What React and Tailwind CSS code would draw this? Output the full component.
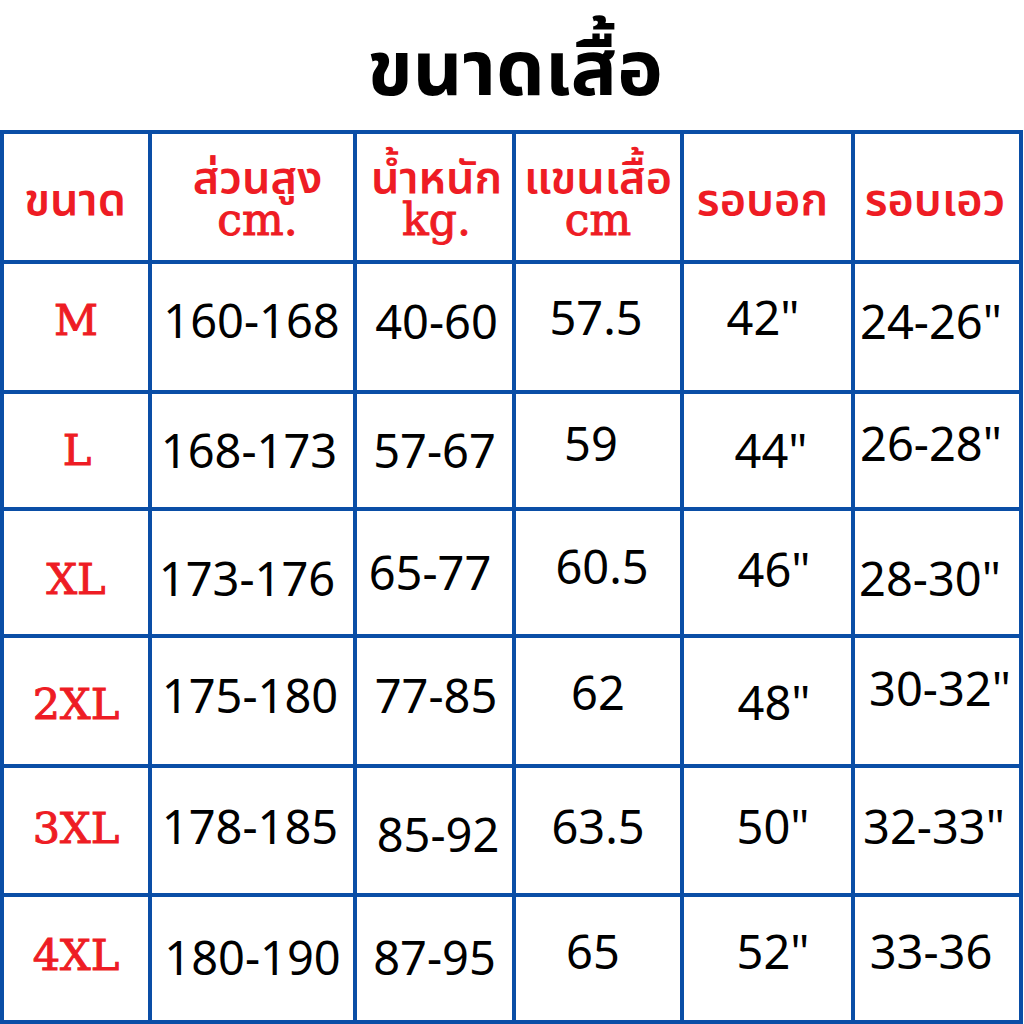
const cols = ["w-[144px]", "w-[201px]", "w-[155px]", "w-[164px]", "w-[167px]", "w-[164px]"];

const header = [
  { th: "ขนาด", pos: "mr-[2px]" },
  { th: "ส่วนสูง", en: "cm.", pos: "ml-[10px]" },
  { th: "น้ำหนัก", en: "kg.", pos: "ml-[4px]" },
  { th: "แขนเสื้อ", en: "cm", pos: "" },
  { th: "รอบอก", pos: "mr-[10px]" },
  { th: "รอบเอว", pos: "mr-[4px]" },
];

// each cell: [text, offset classes] — the source chart is hand-placed, so nudges vary
const rows = [
  {
    h: "h-[126px]",
    size: ["M", "mb-[14px]"],
    vals: [
      ["160-168", "mr-[2px] mb-[13px]"],
      ["40-60", "ml-[4px] mb-[12px]"],
      ["57.5", "mr-[4px] mb-[20px]"],
      ['42"', "mr-[9px] mb-[20px]"],
      ['24-26"', "mr-[12px] mb-[12px]"],
    ],
  },
  {
    h: "h-[113px]",
    size: ["L", "ml-[2px]"],
    vals: [
      ["168-173", "mr-[7px]"],
      ["57-67", ""],
      ["59", "mr-[14px] mb-[15px]"],
      ['44"', "ml-[7px]"],
      ['26-28"', "mr-[12px] mb-[15px]"],
    ],
  },
  {
    h: "h-[123px]",
    size: ["XL", "mt-[13px]"],
    vals: [
      ["173-176", "mr-[11px] mt-[11px]"],
      ["65-77", "mr-[9px]"],
      ["60.5", "ml-[8px] mb-[13px]"],
      ['46"', "ml-[13px] mb-[7px]"],
      ['28-30"', "mr-[14px] mt-[11px]"],
    ],
  },
  {
    h: "h-[126px]",
    size: ["2XL", "mt-[6px]"],
    vals: [
      ["175-180", "mr-[5px] mb-[12px]"],
      ["77-85", "ml-[3px] mb-[12px]"],
      ["62", "mb-[18px]"],
      ['48"', "ml-[13px] mt-[2px]"],
      ['30-32"', "ml-[6px] mb-[26px]"],
    ],
  },
  {
    h: "h-[125px]",
    size: ["3XL", "mb-[5px]"],
    vals: [
      ["178-185", "mr-[5px] mb-[9px]"],
      ["85-92", "ml-[7px] mt-[7px]"],
      ["63.5", "mb-[9px]"],
      ['50"', "ml-[11px] mb-[9px]"],
      ['32-33"', "mr-[6px] mb-[9px]"],
    ],
  },
  {
    h: "h-[123px]",
    size: ["4XL", "mb-[7px]"],
    vals: [
      ["180-190", "mb-[3px]"],
      ["87-95", "mb-[3px]"],
      ["65", "mr-[10px] mb-[15px]"],
      ['52"', "ml-[11px] mb-[15px]"],
      ["33-36", "mr-[12px] mb-[15px]"],
    ],
  },
];

export default function App() {
  return (
    <div className="w-[1024px] h-[1024px] bg-white overflow-hidden">
      <div className="h-[130px] flex items-center justify-center">
        <h1 className="ml-[6px] text-[77px] font-bold text-black leading-none font-['Noto_Sans','Noto_Sans_Thai',sans-serif]">
          ขนาดเสื้อ
        </h1>
      </div>
      <div className="w-[1023px] bg-[#0a4ea6] p-[4px] flex flex-col gap-[4px]">
        <div className="flex gap-[4px] h-[126px]">
          {header.map((c, i) => (
            <div
              key={i}
              className={`${cols[i]} bg-white flex items-center justify-center text-[#ee1c24]`}
            >
              <div className={`flex flex-col items-center leading-none ${c.pos}`}>
                <span className="text-[45px] font-semibold font-['Noto_Sans','Noto_Sans_Thai',sans-serif]">
                  {c.th}
                </span>
                {c.en && (
                  <span className="text-[44px] [-webkit-text-stroke:1px_#ee1c24] font-['DejaVu_Serif',serif]">
                    {c.en}
                  </span>
                )}
              </div>
            </div>
          ))}
        </div>
        {rows.map((r) => (
          <div key={r.size[0]} className={`flex gap-[4px] ${r.h}`}>
            <div
              className={`${cols[0]} bg-white flex items-center justify-center text-[#ee1c24] text-[43px] [-webkit-text-stroke:1px_#ee1c24] font-['DejaVu_Serif',serif]`}
            >
              <span className={r.size[1]}>{r.size[0]}</span>
            </div>
            {r.vals.map(([v, pos], i) => (
              <div
                key={i}
                className={`${cols[i + 1]} bg-white flex items-center justify-center text-black text-[47px] font-['Noto_Sans',sans-serif]`}
              >
                <span className={pos}>{v}</span>
              </div>
            ))}
          </div>
        ))}
      </div>
    </div>
  );
}
